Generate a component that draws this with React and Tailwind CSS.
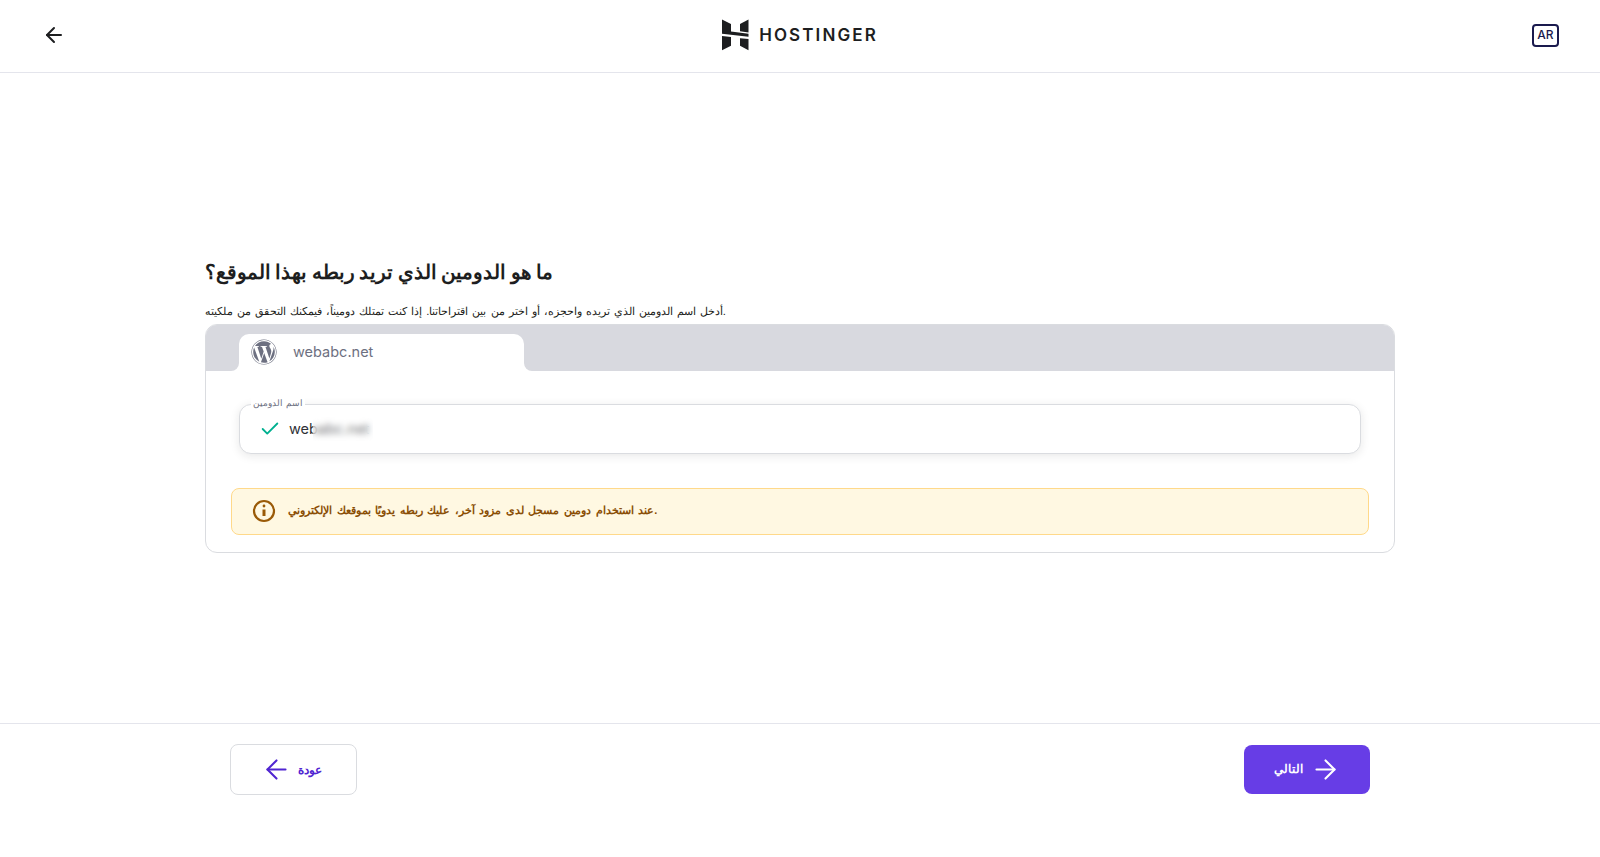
import React from "react";
import { FaWordpress } from "react-icons/fa";
import { ArrowLeft, ArrowRight, Check } from "lucide-react";

function Logo() {
  return (
    <svg width="27" height="32" viewBox="0 0 27 32" fill="#1d1e20">
      <path d="M0 0.5 L9 5 V12.5 L26.5 14.8 V17.8 L0 14.8 Z" />
      <path d="M18 5 L26.5 0.5 V13.4 L18 12.2 Z" />
      <path d="M0 17 L9 18 V26.8 L0 31.3 Z" />
      <path d="M18 19.2 L26.5 20 V31.3 L18 26.8 Z" />
    </svg>
  );
}

export default function App() {
  return (
    <div className="h-[857px] w-full flex flex-col bg-white overflow-hidden font-['Liberation_Sans',Arial,sans-serif] text-[#1d1e20]">
      <header className="h-[73px] shrink-0 border-b border-[#e4e5ec] flex items-center justify-between pl-[42px] pr-[41px] pb-[2px]">
        <ArrowLeft size={24} strokeWidth={2} className="text-[#1d1e20]" />
        <div className="flex items-center gap-[10px] ml-[2px]">
          <Logo />
          <span className="font-['Inter',sans-serif] font-semibold text-[17px] tracking-[2.1px] leading-none text-[#1d1e20]">HOSTINGER</span>
        </div>
        <div className="w-[27px] h-[23px] rounded-[4px] border-2 border-[#1a1a4e] flex items-center justify-center font-['Inter',sans-serif] font-medium text-[12px] text-[#1a1a4e]">AR</div>
      </header>

      <main className="flex-1 flex flex-col px-[205px] pt-[186px]">
        <h1 className="text-[19.5px] [word-spacing:-1px] leading-[26px] font-bold text-left">ما هو الدومين الذي تريد ربطه بهذا الموقع؟</h1>
        <p className="mt-[18px] text-[11.3px] [word-spacing:0.9px] leading-[16px] text-left">أدخل اسم الدومين الذي تريده واحجزه، أو اختر من بين اقتراحاتنا. إذا كنت تمتلك دوميناً، فيمكنك التحقق من ملكيته.</p>

        <section className="mt-[5px] h-[229px] rounded-[12px] border border-[#dadce0] overflow-hidden flex flex-col">
          <div className="h-[46px] shrink-0 bg-[#d8d9df] flex items-end pl-[33px]">
            <div className="relative w-[285px] h-[37px] bg-white rounded-t-[10px] flex items-center pl-[12px] pb-[2px] gap-[16px]">
              <span className="absolute left-[-8px] bottom-0 w-[8px] h-[8px] bg-white"><span className="block w-full h-full bg-[#d8d9df] rounded-br-[8px]" /></span>
              <span className="absolute right-[-8px] bottom-0 w-[8px] h-[8px] bg-white"><span className="block w-full h-full bg-[#d8d9df] rounded-bl-[8px]" /></span>
              <FaWordpress size={26} className="text-[#6d7081]" />
              <span className="font-['Inter',sans-serif] text-[14.5px] text-[#6d7081]">webabc.net</span>
            </div>
          </div>

          <div className="flex-1 px-[25px] flex flex-col">
            <div className="relative mt-[33px] mx-[8px] h-[50px] rounded-[12px] border border-[#dadce0] shadow-[0_2px_10px_rgba(29,30,32,0.10)] bg-white flex items-center pl-[19px]">
              <span className="absolute left-[11px] top-[-8px] bg-white px-[2px] text-[9px] leading-[12px] text-[#6d7081]">اسم الدومين</span>
              <Check size={22} strokeWidth={2} className="text-[#00b090]" />
              <span className="relative ml-[8px] font-['Inter',sans-serif] text-[14.5px] text-[#2f3136]">
                webabc.net
                <span className="absolute left-[24px] top-[-1px] bottom-[-1px] w-[60px] backdrop-blur-[3px] bg-white/30" />
              </span>
            </div>
            <div className="mt-[34px] h-[47px] rounded-[8px] border border-[#ffd98a] bg-[#fff8e2] flex items-center pl-[20px] gap-[12px]">
              <svg width="24" height="24" viewBox="0 0 24 24" fill="none" stroke="#9a5a07" strokeWidth="2.2" className="mb-[1px]">
                <circle cx="12" cy="12" r="10" />
                <path d="M12 10.5 V17" strokeWidth="3" />
                <circle cx="12" cy="7" r="1.4" fill="#9a5a07" stroke="none" />
              </svg>
              <span className="mb-[3px] text-[11px] [word-spacing:1.5px] font-bold leading-[16px] text-[#8a4e05]">عند استخدام دومين مسجل لدى مزود آخر، عليك ربطه يدويًا بموقعك الإلكتروني.</span>
            </div>
          </div>
        </section>
      </main>

      <footer className="h-[134px] shrink-0 border-t border-[#e4e5ec] px-[230px] pt-[20px] flex items-start justify-between">
        <button className="w-[127px] h-[51px] rounded-[8px] border border-[#dadce0] bg-white flex items-center justify-center gap-[6px] pr-[4px] text-[#5025d1] text-[12px] font-bold">
          <ArrowLeft size={31} strokeWidth={1.6} />
          <span>عودة</span>
        </button>
        <button className="mt-[1px] w-[126px] h-[49px] rounded-[8px] bg-[#673de6] flex items-center justify-center gap-[7px] pl-[1px] text-white text-[11.5px] font-bold">
          <span>التالي</span>
          <ArrowRight size={31} strokeWidth={1.6} />
        </button>
      </footer>
    </div>
  );
}
